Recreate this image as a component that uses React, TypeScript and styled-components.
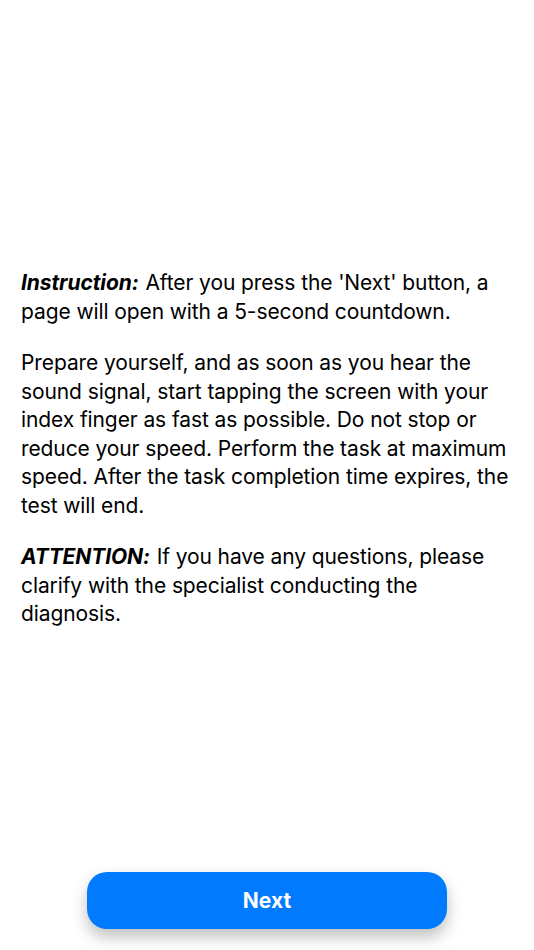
import React from "react";
import styled, { createGlobalStyle } from "styled-components";

const Global = createGlobalStyle`
  html, body { margin: 0; padding: 0; background: #ffffff; }
  body { font-family: Inter, "Noto Sans", sans-serif; -webkit-font-smoothing: antialiased; }
`;

const Screen = styled.div`
  width: 534px;
  height: 950px;
  display: flex;
  flex-direction: column;
  background: #ffffff;
`;

const Content = styled.main`
  flex: 1;
  display: flex;
  flex-direction: column;
  justify-content: center;
  padding: 0 21px;
  padding-top: 26px;
`;

const Paragraph = styled.p`
  margin: 0 0 23px 0;
  font-size: 21px;
  line-height: 28.5px;
  color: #000000;
  letter-spacing: -0.1px;
  &:last-child { margin-bottom: 0; }
`;

const Label = styled.b`
  font-style: italic;
  font-weight: 700;
  margin-right: 1px;
`;

const Footer = styled.footer`
  display: flex;
  justify-content: center;
  padding-bottom: 21px;
`;

const NextButton = styled.button`
  width: 360px;
  height: 57px;
  border: none;
  border-radius: 20px;
  background: #007aff;
  color: #ffffff;
  font-family: Inter, "Noto Sans", sans-serif;
  font-size: 21px;
  font-weight: 700;
  box-shadow: 0 8px 16px rgba(0, 0, 0, 0.25);
  cursor: pointer;
`;

export default function App() {
  return (
    <>
      <Global />
      <Screen>
        <Content>
          <Paragraph>
            <Label>Instruction:</Label> After you press the 'Next' button, a page will open with a 5-second countdown.
          </Paragraph>
          <Paragraph>
            Prepare yourself, and as soon as you hear the sound signal, start tapping the screen with your index finger as fast as possible. Do not stop or reduce your speed. Perform the task at maximum speed. After the task completion time expires, the test will end.
          </Paragraph>
          <Paragraph>
            <Label>ATTENTION:</Label> If you have any questions, please clarify with the specialist conducting the diagnosis.
          </Paragraph>
        </Content>
        <Footer>
          <NextButton>Next</NextButton>
        </Footer>
      </Screen>
    </>
  );
}
